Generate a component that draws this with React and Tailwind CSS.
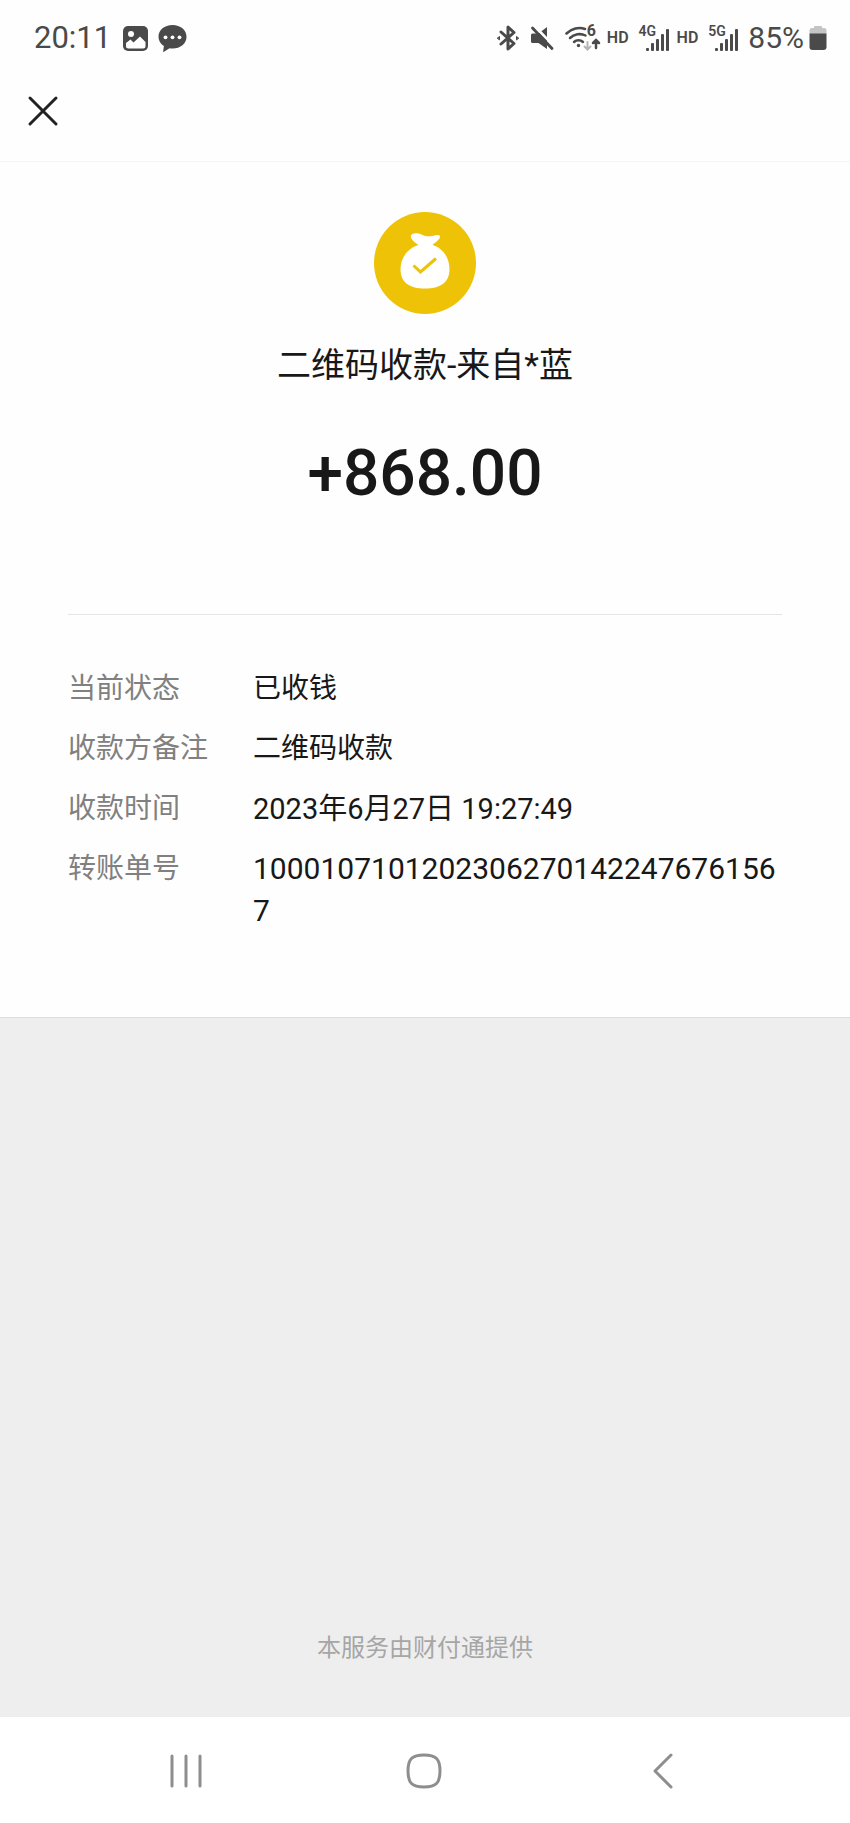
import React from 'react';

const details = [
  { label: '当前状态', value: '已收钱', size: 'text-[28px]' },
  { label: '收款方备注', value: '二维码收款', size: 'text-[28px]' },
  { label: '收款时间', value: '2023年6月27日 19:27:49', size: 'text-[29px]' },
  { label: '转账单号', value: '10001071012023062701422476761567', size: 'text-[30px]' },
];

function Signal({ network }) {
  return (
    <div className="relative w-[30px] h-[26px] flex items-end justify-end">
      <span className="absolute left-0 top-0 text-[14px] leading-[12px] font-semibold">{network}</span>
      <svg width="23" height="23" viewBox="0 0 23 23" fill="currentColor" aria-hidden="true">
        <rect x="0" y="20" width="3" height="3" rx="1" />
        <rect x="5" y="15" width="3" height="8" rx="1" />
        <rect x="10" y="11" width="3" height="12" rx="1" />
        <rect x="15" y="6" width="3" height="17" rx="1" />
        <rect x="20" y="1" width="3" height="22" rx="1" />
      </svg>
    </div>
  );
}

function StatusBar() {
  return (
    <div className="h-[76px] pl-[34px] pr-[23px] flex items-center justify-between text-[#4a4a4a]">
      <div className="flex items-center">
        <span className="text-[31px] leading-[36px]">20:11</span>
        <svg className="ml-3" width="25" height="25" viewBox="0 0 25 25" aria-hidden="true">
          <rect width="25" height="25" rx="5" fill="currentColor" />
          <circle cx="8" cy="8" r="3" fill="#fff" />
          <path d="M3 17 L7.5 13.5 L10.5 16.5 L17 10.5 L22.5 16 V20 Q22.5 22.5 20 22.5 H5.5 Q3 22.5 3 20 Z" fill="#fff" />
        </svg>
        <svg className="ml-[10px]" width="29" height="28" viewBox="0 0 29 28" aria-hidden="true">
          <path d="M14.5 1 C22.5 1 28.5 6 28.5 12.7 C28.5 19.5 22.5 24.5 14.5 24.5 C13.5 24.5 12.5 24.4 11.5 24.2 L6 27.8 C5.3 28.2 5 27.8 5.2 27 L5.9 22 C2.5 19.8 .5 16.5 .5 12.7 C.5 6 6.5 1 14.5 1 Z" fill="currentColor" />
          <circle cx="7.5" cy="13.3" r="1.9" fill="#fff" />
          <circle cx="14.5" cy="13.3" r="1.9" fill="#fff" />
          <circle cx="21.5" cy="13.3" r="1.9" fill="#fff" />
        </svg>
      </div>

      <div className="flex items-center">
        <svg width="22" height="26" viewBox="0 0 22 26" fill="none" stroke="currentColor" strokeWidth="3" strokeLinejoin="round" strokeLinecap="round" aria-hidden="true">
          <path d="M4 7 L17 18.5 L11 24 V2 L17 7.5 L4 19" />
          <path d="M.5 13 L2.5 11.5 V14.5 Z M21.5 13 L19.5 11.5 V14.5 Z" fill="currentColor" strokeWidth="1" />
        </svg>
        <svg className="ml-[11px]" width="24" height="26" viewBox="0 0 24 26" aria-hidden="true">
          <path d="M2.5 8.5 H8.5 L17 2 V24 L8.5 18 H2.5 Q1 18 1 16.5 V10 Q1 8.500 2.5 8.5 Z" fill="currentColor" />
          <path d="M4.5 1 L24 21" stroke="#fefefe" strokeWidth="2.6" />
          <path d="M2.5 3 L22 23.5" stroke="currentColor" strokeWidth="2.8" strokeLinecap="round" />
        </svg>
        <div className="relative ml-[11px] w-[36px] h-[26px]">
          <svg width="36" height="26" viewBox="0 0 36 26" fill="none" stroke="currentColor" strokeWidth="2.5" strokeLinecap="round" aria-hidden="true">
            <path d="M1.5 8.5 C6.5 3.5 14 1.500 20 4" />
            <path d="M5 13 C9 9 15.5 8 20.5 10.5" />
            <path d="M9 17 C11.5 14.7 15.5 14.7 18 17" />
            <circle cx="13.5" cy="20.5" r="1.7" fill="currentColor" stroke="none" />
            <path d="M22.5 17 V24 M19.5 21.5 L22.5 24.5 L25.5 21.5" stroke="#b5b5b5" strokeWidth="2" />
            <path d="M31 23 V15.5 M28 18 L31 15 L34 18" />
          </svg>
          <span className="absolute left-[22px] top-0 text-[16px] leading-[12px] font-bold">6</span>
        </div>
        <span className="ml-[6px] text-[16px] leading-[20px] font-semibold">HD</span>
        <div className="ml-[10px]"><Signal network="4G" /></div>
        <span className="ml-[8px] text-[16px] leading-[20px] font-semibold">HD</span>
        <div className="ml-[10px]"><Signal network="5G" /></div>
        <span className="ml-[10px] text-[30px] leading-[36px]">85%</span>
        <svg className="ml-[5px]" width="18" height="26" viewBox="0 0 18 26" aria-hidden="true">
          <path d="M6 1 H12 Q13 1 13 2 V3 H15 Q17.5 3 17.5 5.5 V9 H.5 V5.5 Q.5 3 3 3 H5 V2 Q5 1 6 1 Z" fill="#c4c4c4" />
          <path d="M.5 8.5 H17.5 V22 Q17.5 25 14.5 25 H3.5 Q.5 25 .5 22 Z" fill="currentColor" />
        </svg>
      </div>
    </div>
  );
}

function MoneyBag() {
  return (
    <svg width="102" height="102" viewBox="0 0 102 102" aria-hidden="true">
      <circle cx="51" cy="51" r="51" fill="#edc207" />
      <path
        d="M44.5 33 C41 31 38 28 37 25.5 C36 22.5 39 21 43 21.3 C47 21.7 49 24 53 24.3 C57 24.6 60 23.3 64 23 C66.5 23 66.5 25.5 65 27 C63 29.5 60.5 31 58.5 33 C69 36 75.5 46 75.5 57 C75.5 71 66 76.5 51 76.5 C36 76.5 26.5 71 26.5 57 C26.5 46 34 36 44.5 33 Z"
        fill="#fff"
      />
      <path d="M39.5 53.5 L46.5 60 L62 46.5" fill="none" stroke="#edc207" strokeWidth="3" />
    </svg>
  );
}

function App() {
  return (
    <div className="min-h-screen flex flex-col bg-[#eeeeee] text-[#181818] font-['Roboto','Noto_Sans_CJK_SC',sans-serif]">
      <header className="bg-[#fefefe] border-b border-[#f5f5f5]">
        <StatusBar />
        <div className="h-[85px] px-[27px] pt-[19px]">
          <button type="button" aria-label="关闭" className="block cursor-pointer">
            <svg width="32" height="32" viewBox="0 0 32 32" fill="none" stroke="#222" strokeWidth="3" strokeLinecap="round">
              <path d="M3 3 L29 29 M29 3 L3 29" />
            </svg>
          </button>
        </div>
      </header>

      <main className="bg-[#fefefe] px-[68px] pt-[50px] pb-[85px] border-b border-[#dddddd]">
        <section className="flex flex-col items-center pb-[102px] border-b border-[#e5e5e5]">
          <MoneyBag />
          <h1 className="mt-[27px] text-[34px] leading-[48px]">二维码收款-来自*蓝</h1>
          <p className="mt-[47px] text-[64px] leading-[76px] font-medium">+868.00</p>
        </section>

        <dl className="mt-[53px] flex flex-col gap-[18px] leading-[42px]">
          {details.map((item) => (
            <div key={item.label} className="flex">
              <dt className="w-[185px] shrink-0 text-[28px] text-[#808080]">{item.label}</dt>
              <dd className={`min-w-0 flex-1 break-all ${item.size}`}>{item.value}</dd>
            </div>
          ))}
        </dl>
      </main>

      <footer className="mt-auto pb-[51px] text-center text-[24px] leading-[36px] text-[#a6a6a6]">
        本服务由财付通提供
      </footer>

      <nav className="h-[106px] shrink-0 bg-white pt-[2px] pl-[67px] pr-[68px] grid grid-cols-3 items-center justify-items-center text-[#8e8e8e]">
        <button type="button" aria-label="最近任务" className="cursor-pointer">
          <svg width="36" height="36" viewBox="0 0 36 36" fill="none" stroke="currentColor" strokeWidth="3" strokeLinecap="round">
            <path d="M4 3 V33 M18 3 V33 M32 3 V33" />
          </svg>
        </button>
        <button type="button" aria-label="主页" className="cursor-pointer">
          <svg width="36" height="36" viewBox="0 0 36 36" fill="none" stroke="currentColor" strokeWidth="3">
            <path d="M18 2 C30 2 34 6 34 18 C34 30 30 34 18 34 C6 34 2 30 2 18 C2 6 6 2 18 2 Z" />
          </svg>
        </button>
        <button type="button" aria-label="返回" className="cursor-pointer">
          <svg width="22" height="36" viewBox="0 0 22 36" fill="none" stroke="currentColor" strokeWidth="3" strokeLinecap="round" strokeLinejoin="round">
            <path d="M19 2 L3 18 L19 34" />
          </svg>
        </button>
      </nav>
    </div>
  );
}

export default App;
